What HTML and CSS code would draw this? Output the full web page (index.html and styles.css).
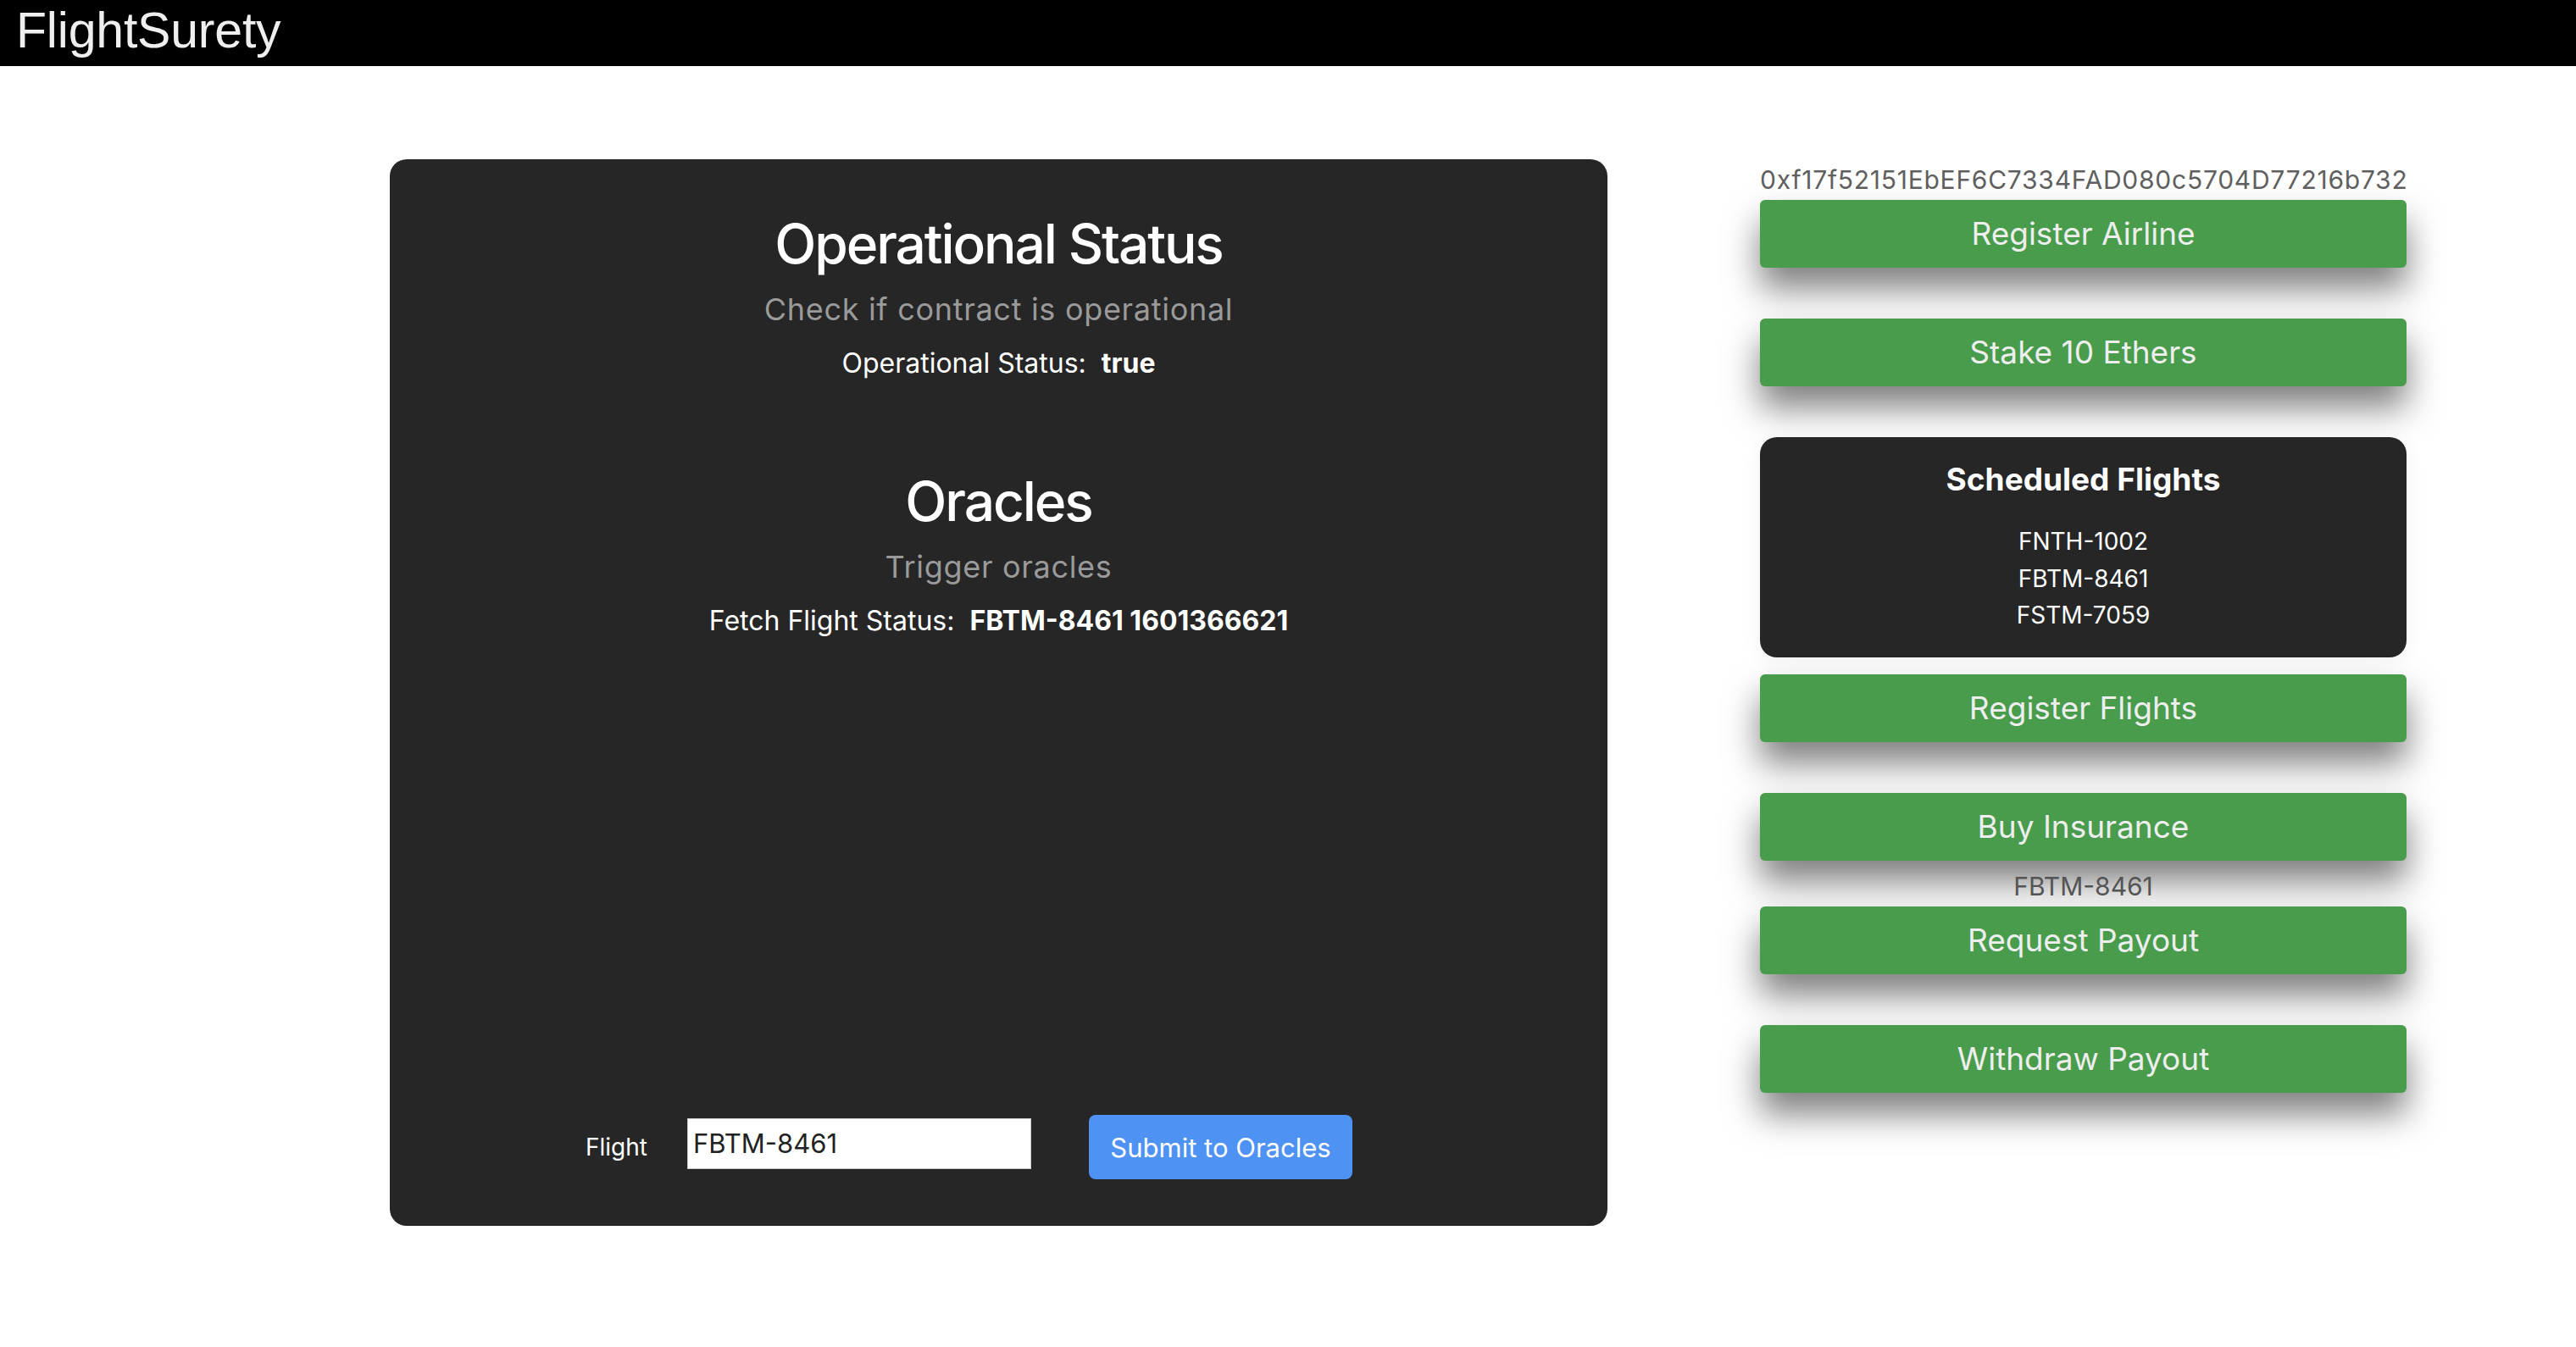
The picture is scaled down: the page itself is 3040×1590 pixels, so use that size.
FILE: index.html
```html
<!DOCTYPE html>
<html lang="en">
<head>
<meta charset="utf-8">
<title>FlightSurety</title>
<link rel="stylesheet" href="styles.css">
</head>
<body>
<header class="topbar">
  <span class="brand">FlightSurety</span>
</header>
<main class="layout">
  <section class="panel">
    <div class="block block-status">
      <h2 class="block-title">Operational Status</h2>
      <p class="block-sub">Check if contract is operational</p>
      <p class="block-line">Operational Status:&nbsp; <strong>true</strong></p>
    </div>
    <div class="block block-oracles">
      <h2 class="block-title">Oracles</h2>
      <p class="block-sub">Trigger oracles</p>
      <p class="block-line">Fetch Flight Status:&nbsp; <strong>FBTM-8461 1601366621</strong></p>
    </div>
    <form class="oracle-form">
      <label class="field-label" for="flight-number">Flight</label>
      <input class="field-input" id="flight-number" type="text" value="FBTM-8461">
      <button class="submit-btn" type="button">Submit to Oracles</button>
    </form>
  </section>
  <aside class="sidebar">
    <div class="address">0xf17f52151EbEF6C7334FAD080c5704D77216b732</div>
    <button class="action" type="button">Register Airline</button>
    <button class="action" type="button">Stake 10 Ethers</button>
    <div class="flights">
      <h3 class="flights-title">Scheduled Flights</h3>
      <ul class="flights-list">
        <li>FNTH-1002</li>
        <li>FBTM-8461</li>
        <li>FSTM-7059</li>
      </ul>
    </div>
    <button class="action" type="button">Register Flights</button>
    <button class="action action-tight" type="button">Buy Insurance</button>
    <div class="selected-flight">FBTM-8461</div>
    <button class="action" type="button">Request Payout</button>
    <button class="action" type="button">Withdraw Payout</button>
  </aside>
</main>
</body>
</html>
```

FILE: styles.css
```css
* {
  box-sizing: border-box;
}

html, body {
  margin: 0;
  padding: 0;
  background: #ffffff;
}

body {
  font-family: Inter, "Noto Sans", sans-serif;
  color: #ffffff;
}

.topbar {
  height: 78px;
  background: #000000;
  padding-left: 19px;
}

.brand {
  display: block;
  font-family: "Liberation Sans", Arial, sans-serif;
  font-size: 59px;
  line-height: 72px;
  letter-spacing: -0.2px;
  color: #efefef;
}

.layout {
  display: flex;
  align-items: flex-start;
  gap: 180px;
  padding: 110px 0 0 460px;
}

.panel {
  width: 1437px;
  height: 1259px;
  background: #262626;
  border-radius: 20px;
  padding-top: 62px;
  display: flex;
  flex-direction: column;
  text-align: center;
}

.block + .block {
  margin-top: 105px;
}

.block-title {
  margin: 0;
  font-size: 64px;
  line-height: 76px;
  font-weight: 500;
  color: #ffffff;
  letter-spacing: -2.1px;
}

.block-sub {
  margin: 17px 0 0;
  font-size: 36px;
  line-height: 44px;
  color: #9a9a9a;
  letter-spacing: 0.7px;
}

.block-line {
  margin: 22px 0 0;
  font-size: 32px;
  line-height: 40px;
  color: #ffffff;
}

.block-line strong {
  font-weight: 700;
}

.oracle-form {
  margin-top: auto;
  margin-bottom: 55px;
  display: flex;
  align-items: center;
  padding-left: 231px;
  height: 76px;
}

.field-label {
  font-size: 28px;
  color: #ffffff;
  width: 120px;
  text-align: left;
}

.field-input {
  width: 406px;
  height: 60px;
  border: 1px solid #c8c8c8;
  background: #ffffff;
  font-family: Inter, "Noto Sans", sans-serif;
  font-size: 31px;
  color: #222222;
  padding: 0 6px;
  margin: 0 68px 9px 0;
  outline: none;
}

.submit-btn {
  width: 311px;
  height: 76px;
  border: none;
  border-radius: 8px;
  background: #4e92f4;
  color: #ffffff;
  font-family: Inter, "Noto Sans", sans-serif;
  font-size: 31px;
  padding: 0;
}

.sidebar {
  width: 763px;
  padding-top: 6px;
  display: flex;
  flex-direction: column;
  text-align: center;
}

.address {
  font-size: 30px;
  line-height: 36px;
  letter-spacing: 0.75px;
  color: #606060;
  margin-bottom: 6px;
  white-space: nowrap;
}

.action {
  height: 80px;
  margin: 0 0 60px;
  border: none;
  border-radius: 6px;
  background: #489c4c;
  color: #eeeeee;
  font-family: Inter, "Noto Sans", sans-serif;
  font-size: 37px;
  line-height: 80px;
  padding: 0;
  box-shadow: 0 25px 40px rgba(0, 0, 0, 0.5);
}

.action-tight {
  margin-bottom: 12px;
}

.flights {
  height: 260px;
  margin-bottom: 20px;
  background: #262626;
  border-radius: 20px;
  padding-top: 28px;
  box-shadow: 0 4px 24px rgba(0, 0, 0, 0.06);
}

.flights-title {
  margin: 0;
  font-size: 37px;
  line-height: 44px;
  font-weight: 700;
  color: #ffffff;
}

.flights-list {
  list-style: none;
  margin: 30px 0 0;
  padding: 0;
  font-size: 28px;
  line-height: 43.5px;
  color: #ffffff;
}

.selected-flight {
  font-size: 30px;
  line-height: 36px;
  color: #555555;
  margin-bottom: 6px;
}
```
